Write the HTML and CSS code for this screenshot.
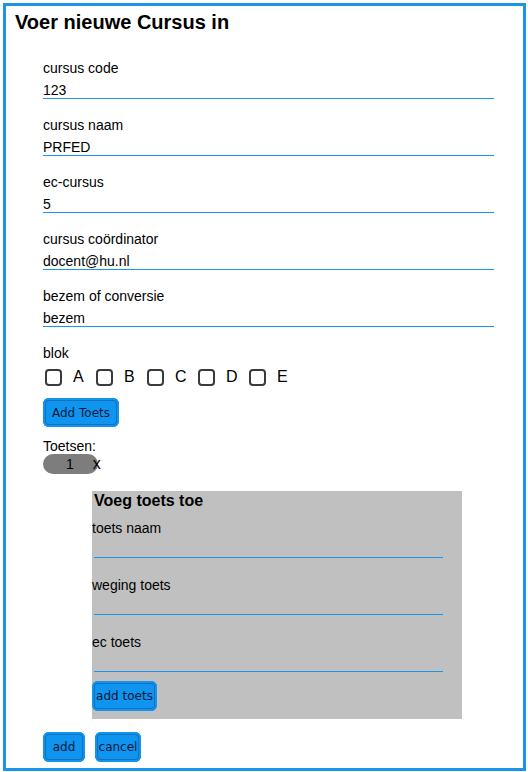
FILE: index.html
```html
<!DOCTYPE html>
<html lang="nl">
<head>
<meta charset="utf-8">
<title>Voer nieuwe Cursus in</title>
<link rel="stylesheet" href="styles.css">
</head>
<body>
<div class="frame">
  <h1 class="title">Voer nieuwe Cursus in</h1>
  <form class="form">
    <div class="field">
      <label class="label">cursus code</label>
      <input class="input" type="text" value="123">
    </div>
    <div class="field">
      <label class="label">cursus naam</label>
      <input class="input" type="text" value="PRFED">
    </div>
    <div class="field">
      <label class="label">ec-cursus</label>
      <input class="input" type="text" value="5">
    </div>
    <div class="field">
      <label class="label">cursus coördinator</label>
      <input class="input" type="text" value="docent@hu.nl">
    </div>
    <div class="field">
      <label class="label">bezem of conversie</label>
      <input class="input" type="text" value="bezem">
    </div>
    <div class="label">blok</div>
    <div class="checks">
      <label class="check"><span class="box"></span><span class="letter">A</span></label>
      <label class="check"><span class="box"></span><span class="letter">B</span></label>
      <label class="check"><span class="box"></span><span class="letter">C</span></label>
      <label class="check"><span class="box"></span><span class="letter">D</span></label>
      <label class="check"><span class="box"></span><span class="letter">E</span></label>
    </div>
    <button type="button" class="btn btn-addtoets">Add Toets</button>
    <div class="label toetsen-label">Toetsen:</div>
    <div class="pill"><span class="pill-num">1</span><span class="pill-x">x</span></div>
    <div class="panel">
      <h2 class="panel-title">Voeg toets toe</h2>
      <div class="pfield">
        <label class="label">toets naam</label>
        <input class="pinput" type="text">
      </div>
      <div class="pfield">
        <label class="label">weging toets</label>
        <input class="pinput" type="text">
      </div>
      <div class="pfield">
        <label class="label">ec toets</label>
        <input class="pinput" type="text">
      </div>
      <button type="button" class="btn btn-toets">add toets</button>
    </div>
    <div class="actions">
      <button type="button" class="btn btn-add">add</button>
      <button type="button" class="btn btn-cancel">cancel</button>
    </div>
  </form>
</div>
</body>
</html>
```
FILE: styles.css
```css
html, body {
  margin: 0;
  padding: 0;
  background: #ffffff;
}
body {
  padding: 3px 2px 1px 3px;
  font-family: "Liberation Sans", Arial, sans-serif;
  color: #000;
}
.frame {
  box-sizing: border-box;
  width: 523px;
  height: 768px;
  border: 3px solid #1c95e8;
  padding: 5px 0 0 9px;
}
.title {
  margin: 0;
  font-size: 20px;
  line-height: 23px;
  font-weight: bold;
}
.form {
  margin: 26px 0 0 28px;
  display: flex;
  flex-direction: column;
  align-items: flex-start;
}
.label {
  display: block;
  font-size: 14px;
  line-height: 17px;
}
.field {
  display: flex;
  flex-direction: column;
  margin-bottom: 18px;
}
.input, .pinput {
  box-sizing: content-box;
  border: none;
  border-bottom: 1px solid #1c95e8;
  outline: none;
  background: transparent;
  padding: 0;
  margin: 4px 0 0 0;
  height: 17px;
  width: 451px;
  font-family: "Liberation Sans", Arial, sans-serif;
  font-size: 14px;
  color: #000;
}
.checks {
  display: flex;
  margin: 7px 0 0 2px;
}
.check {
  display: flex;
  align-items: flex-start;
  width: 51px;
}
.box {
  box-sizing: border-box;
  width: 17px;
  height: 17px;
  border: 2px solid #3a3a3a;
  border-radius: 4px;
  background: #fff;
}
.letter {
  margin-left: 11px;
  font-size: 16px;
  line-height: 15px;
}
.btn {
  box-sizing: border-box;
  height: 29px;
  padding: 0;
  border: none;
  border-radius: 6px;
  background: #0f95f0;
  box-shadow: inset 0 0 0 2px #0f95f0, inset 0 0 0 3px rgba(20, 60, 110, 0.4);
  color: #0a1836;
  font-family: "Comic Sans MS", "DejaVu Sans", sans-serif;
  font-size: 12px;
  text-align: center;
}
.btn-addtoets {
  width: 76px;
  margin-top: 12px;
}
.toetsen-label {
  margin-top: 11px;
  line-height: 16px;
}
.pill {
  display: flex;
  align-items: center;
  width: 55px;
  height: 20px;
  border-radius: 10px;
  background: #7d7d7d;
}
.pill-num {
  margin-left: 23px;
  font-size: 14px;
}
.pill-x {
  margin-left: 19px;
  font-size: 16px;
}
.panel {
  box-sizing: border-box;
  margin: 17px 0 0 49px;
  width: 370px;
  height: 228px;
  background: #c0c0c0;
  padding: 1px 0 8px 0;
  display: flex;
  flex-direction: column;
  align-items: flex-start;
}
.panel-title {
  margin: 0 0 0 2px;
  font-size: 16px;
  line-height: 18px;
  font-weight: bold;
}
.pfield {
  display: flex;
  flex-direction: column;
  margin-top: 10px;
}
.pfield + .pfield {
  margin-top: 19px;
}
.pinput {
  margin: 3px 0 0 2px;
  width: 349px;
}
.btn-toets {
  width: 65px;
  height: 30px;
  margin-top: 9px;
}
.actions {
  display: flex;
  gap: 10px;
  margin-top: 13px;
}
.btn-add {
  width: 42px;
  height: 30px;
}
.btn-cancel {
  width: 46px;
  height: 30px;
}
```
